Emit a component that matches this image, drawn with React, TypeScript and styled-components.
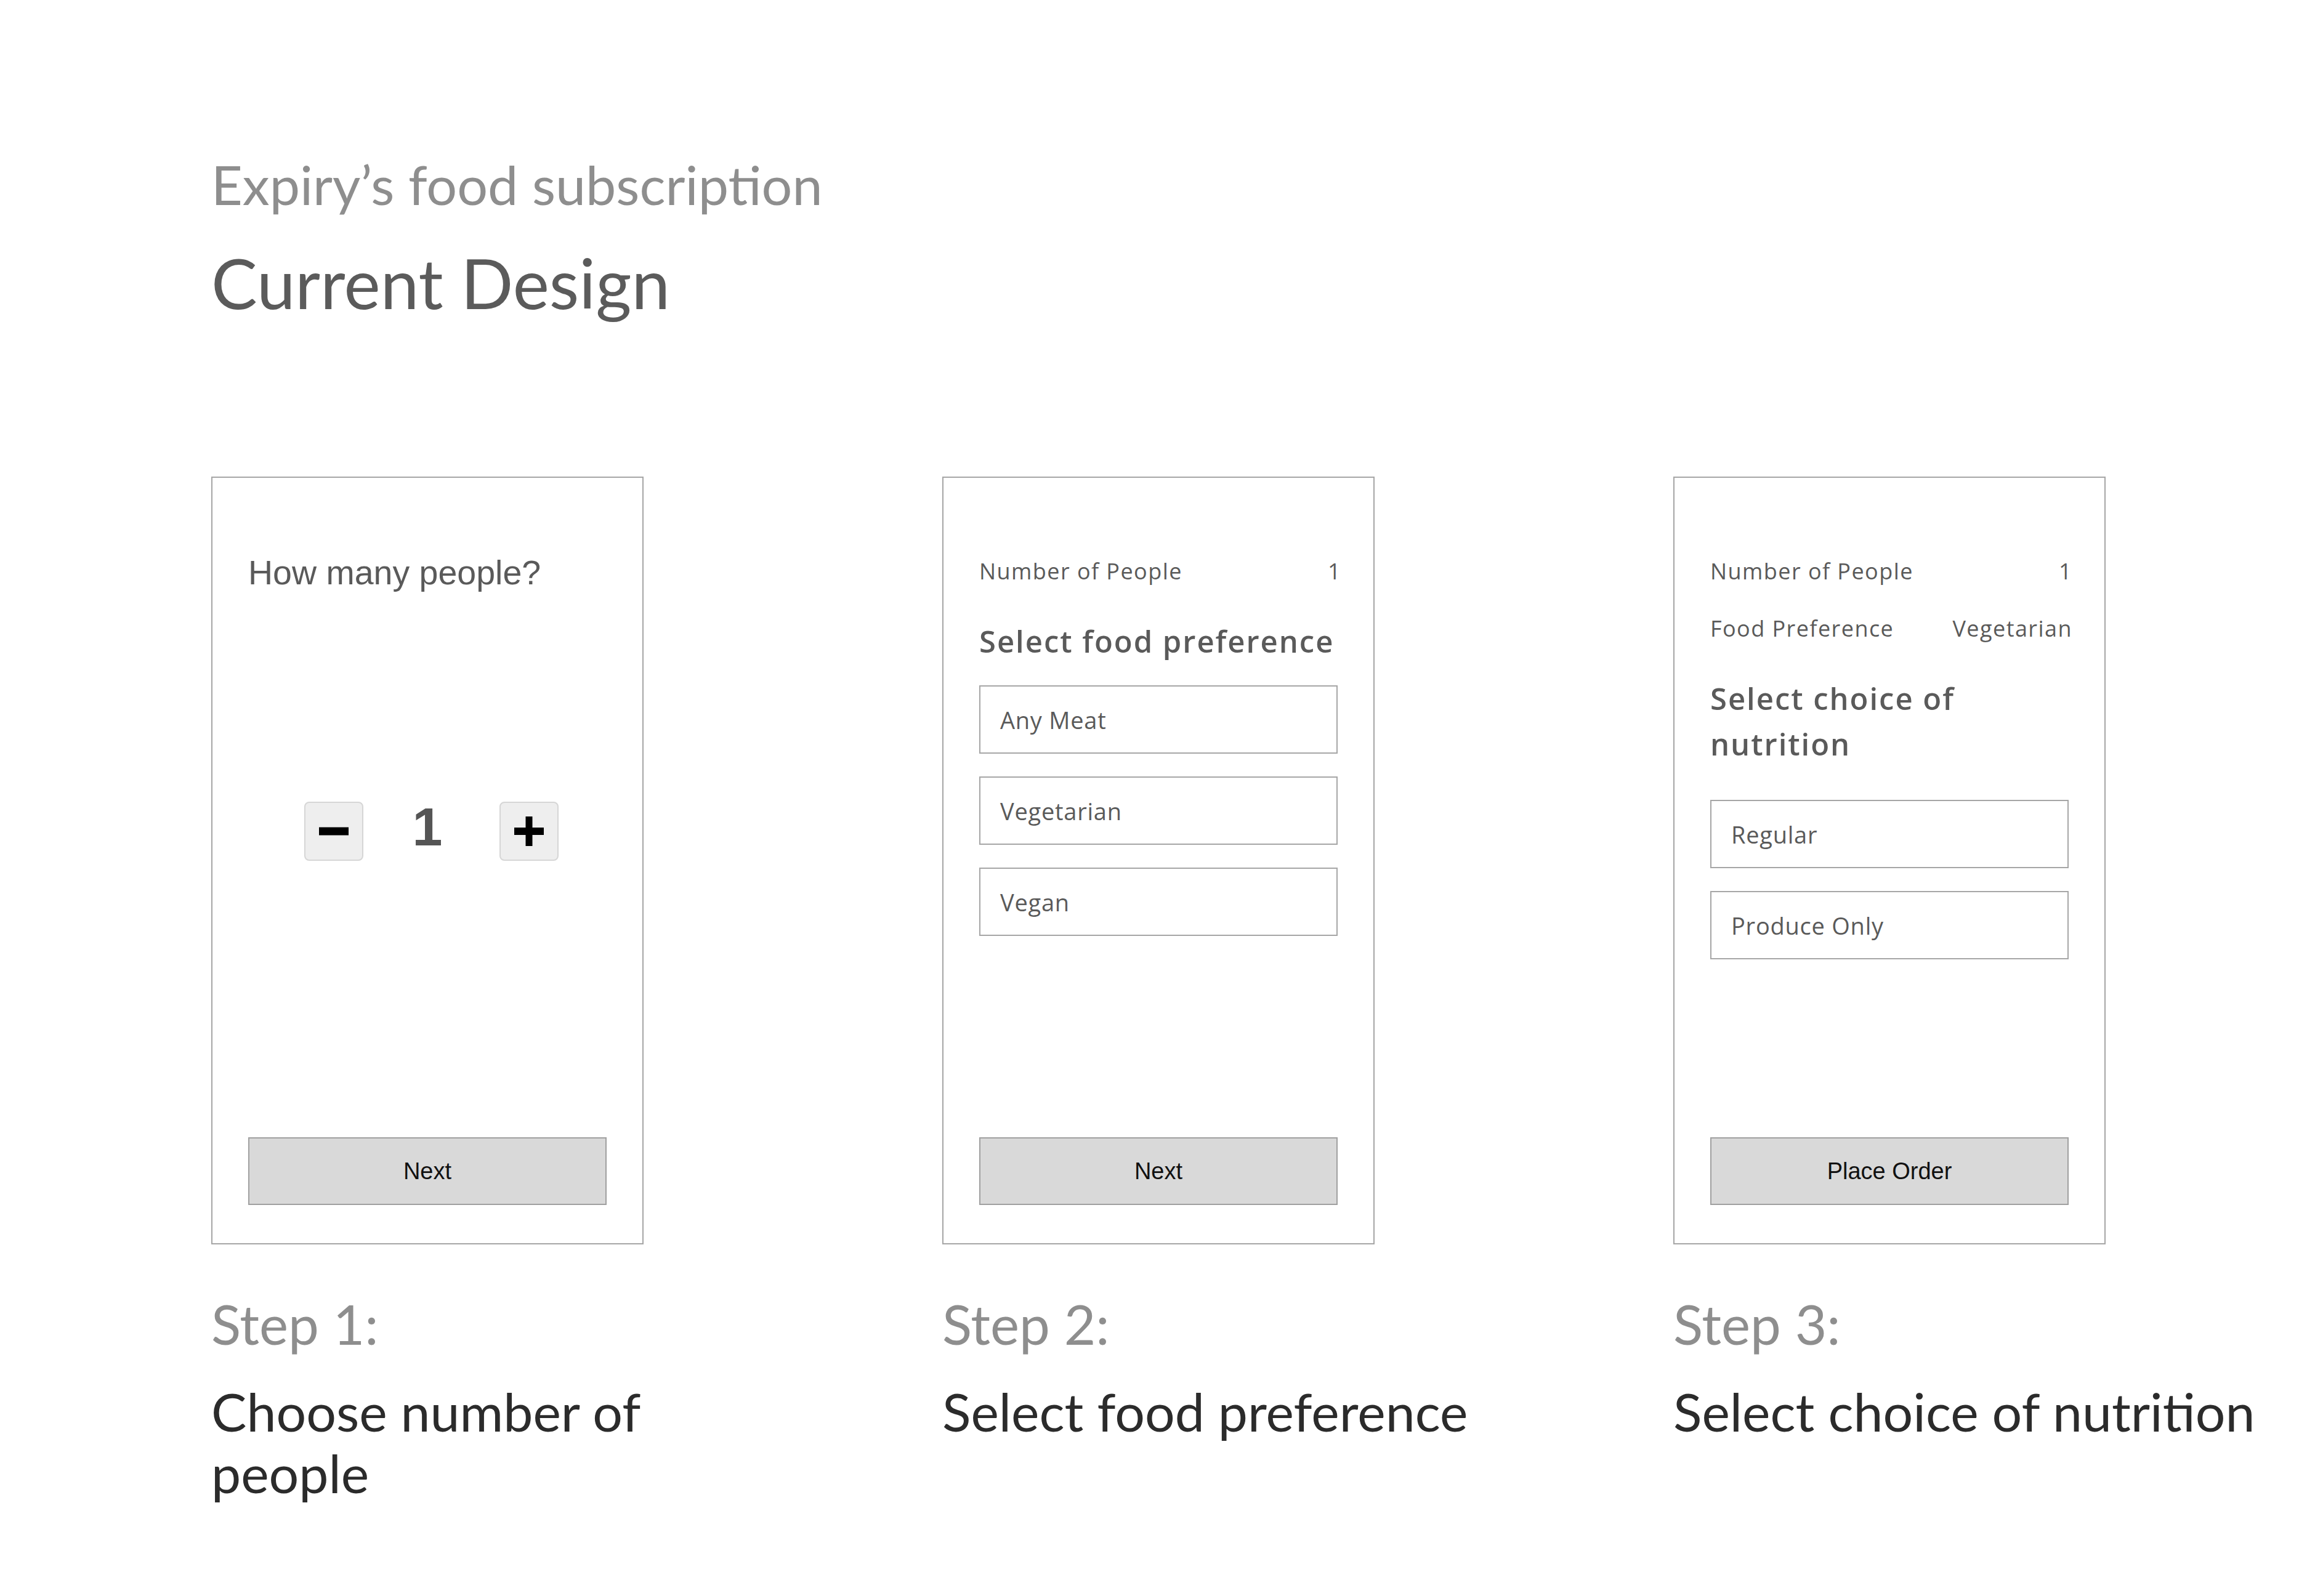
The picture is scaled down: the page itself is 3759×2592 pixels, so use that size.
import React from "react";
import styled, { createGlobalStyle } from "styled-components";

const GlobalStyle = createGlobalStyle`
  body {
    margin: 0;
    background: #ffffff;
  }
`;

const headingFont = `Lato, "Open Sans", sans-serif`;
const cardFont = `"Open Sans", "Noto Sans", sans-serif`;
const plainFont = `"Liberation Sans", Arial, sans-serif`;

const Page = styled.div`
  padding: 249px 0 0 343px;
  min-height: 2592px;
  box-sizing: border-box;
`;

const Title = styled.h2`
  margin: 0;
  font-family: ${headingFont};
  font-weight: 400;
  font-size: 88px;
  line-height: 100px;
  color: #8e8e8e;
`;

const Subtitle = styled.h1`
  margin: 45px 0 0;
  font-family: ${headingFont};
  font-weight: 400;
  font-size: 112px;
  line-height: 130px;
  color: #5b5b5b;
`;

const Steps = styled.div`
  display: flex;
  gap: 485px;
  margin-top: 250px;
`;

const StepColumn = styled.section`
  width: 702px;
  flex: none;
`;

const Card = styled.div`
  width: 702px;
  height: 1247px;
  box-sizing: border-box;
  border: 2px solid #a6a6a6;
  padding: 130px 58px 62px;
  display: flex;
  flex-direction: column;
  color: #595959;
`;

const Question = styled.div`
  font-family: ${plainFont};
  font-size: 55.5px;
  line-height: 48px;
  color: #5a5a5a;
`;

const Stepper = styled.div`
  display: flex;
  align-items: center;
  margin: 345px 0 0 91px;
`;

const StepButton = styled.div`
  width: 96px;
  height: 96px;
  box-sizing: border-box;
  border: 2px solid #d6d6d6;
  border-radius: 8px;
  background: #eeeeee;
  display: flex;
  align-items: center;
  justify-content: center;
`;

const Count = styled.div`
  width: 60px;
  margin: 0 87px 14px 74px;
  text-align: center;
  font-family: ${plainFont};
  font-weight: 700;
  font-size: 88px;
  line-height: 1;
  color: #555555;
`;

const InfoRow = styled.div<{ $gap?: number }>`
  display: flex;
  justify-content: space-between;
  margin: ${(p) => p.$gap ?? 0}px -6px 0 0;
  font-family: ${cardFont};
  font-size: 36px;
  line-height: 44px;
  letter-spacing: 0.04em;
  color: #5a5a5a;
`;

const CardHeading = styled.div`
  margin-top: 54px;
  font-family: ${cardFont};
  font-weight: 600;
  font-size: 49px;
  line-height: 74px;
  letter-spacing: 0.04em;
  color: #5a5a5a;
`;

const Options = styled.div<{ $top: number }>`
  display: flex;
  flex-direction: column;
  gap: 37px;
  margin-top: ${(p) => p.$top}px;
`;

const Option = styled.div`
  height: 111px;
  box-sizing: border-box;
  border: 2px solid #a6a6a6;
  padding-left: 32px;
  display: flex;
  align-items: center;
  font-family: ${cardFont};
  font-size: 38px;
  letter-spacing: 0.02em;
  color: #5a5a5a;
`;

const ActionButton = styled.div`
  margin-top: auto;
  height: 110px;
  box-sizing: border-box;
  border: 2px solid #a0a0a0;
  background: #d9d9d9;
  display: flex;
  align-items: center;
  justify-content: center;
  font-family: ${plainFont};
  font-size: 38px;
  color: #111111;
`;

const StepLabel = styled.div`
  margin-top: 79px;
  font-family: ${headingFont};
  font-size: 89px;
  line-height: 100px;
  color: #8e8e8e;
`;

const StepText = styled.div`
  margin-top: 42px;
  width: 960px;
  font-family: ${headingFont};
  font-size: 86px;
  line-height: 100px;
  color: #2b2b2b;
`;

const MinusIcon = () => (
  <svg width="48" height="14" viewBox="0 0 48 14">
    <rect x="0" y="0.5" width="48" height="13" fill="#000" />
  </svg>
);

const PlusIcon = () => (
  <svg width="48" height="48" viewBox="0 0 48 48">
    <rect x="0" y="18" width="48" height="12" fill="#000" />
    <rect x="18.5" y="0" width="11" height="48" fill="#000" />
  </svg>
);

export default function App() {
  return (
    <>
      <GlobalStyle />
      <Page>
        <Title>Expiry’s food subscription</Title>
        <Subtitle>Current Design</Subtitle>

        <Steps>
          <StepColumn>
            <Card>
              <Question>How many people?</Question>
              <Stepper>
                <StepButton>
                  <MinusIcon />
                </StepButton>
                <Count>1</Count>
                <StepButton>
                  <PlusIcon />
                </StepButton>
              </Stepper>
              <ActionButton>Next</ActionButton>
            </Card>
            <StepLabel>Step 1:</StepLabel>
            <StepText>Choose number of people</StepText>
          </StepColumn>

          <StepColumn>
            <Card>
              <InfoRow>
                <span>Number of People</span>
                <span>1</span>
              </InfoRow>
              <CardHeading>Select food preference</CardHeading>
              <Options $top={35}>
                <Option>Any Meat</Option>
                <Option>Vegetarian</Option>
                <Option>Vegan</Option>
              </Options>
              <ActionButton>Next</ActionButton>
            </Card>
            <StepLabel>Step 2:</StepLabel>
            <StepText>Select food preference</StepText>
          </StepColumn>

          <StepColumn>
            <Card>
              <InfoRow>
                <span>Number of People</span>
                <span>1</span>
              </InfoRow>
              <InfoRow $gap={49}>
                <span>Food Preference</span>
                <span>Vegetarian</span>
              </InfoRow>
              <CardHeading>Select choice of nutrition</CardHeading>
              <Options $top={54}>
                <Option>Regular</Option>
                <Option>Produce Only</Option>
              </Options>
              <ActionButton>Place Order</ActionButton>
            </Card>
            <StepLabel>Step 3:</StepLabel>
            <StepText>Select choice of nutrition</StepText>
          </StepColumn>
        </Steps>
      </Page>
    </>
  );
}
